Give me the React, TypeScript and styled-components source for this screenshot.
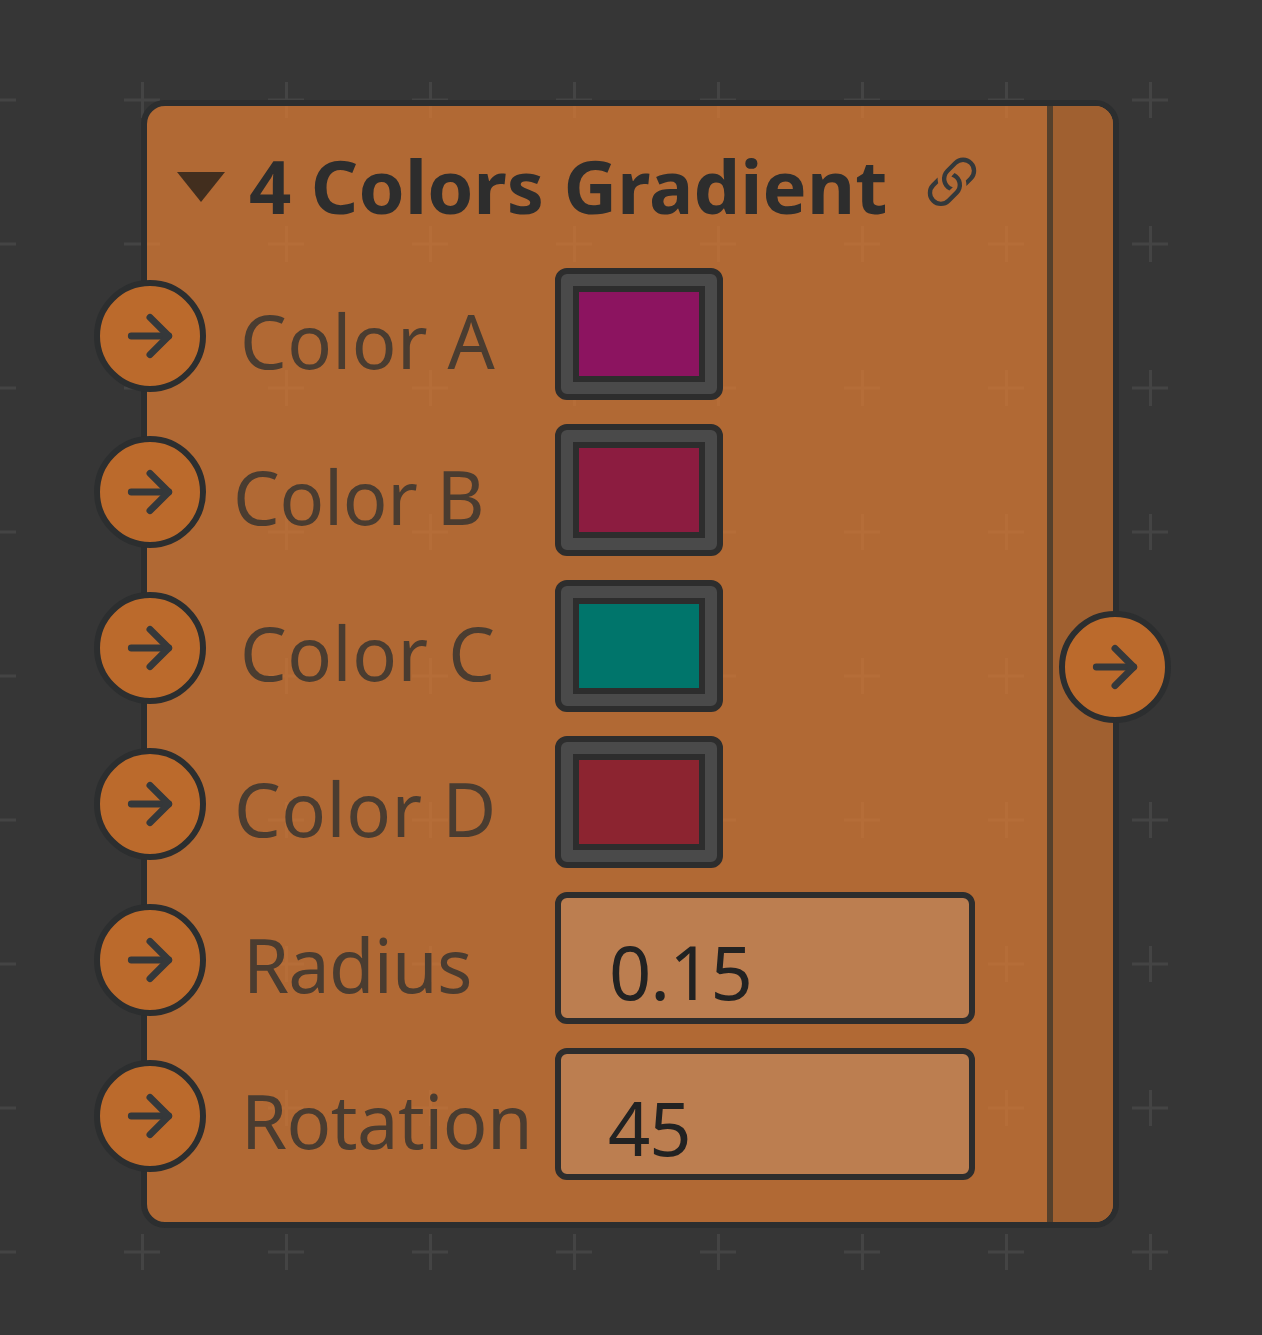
import React from 'react';
import styled, { createGlobalStyle } from 'styled-components';
import { ArrowRight } from 'lucide-react';
import { BsLink45Deg } from 'react-icons/bs';

const GlobalStyle = createGlobalStyle`
  html, body {
    margin: 0;
    padding: 0;
    background: #363636;
  }
  * {
    box-sizing: border-box;
  }
`;

const Page = styled.div`
  position: relative;
  width: 1262px;
  height: 1335px;
  padding: 100px 0 0 141px;
  overflow: hidden;
  background: #363636;
  font-family: 'Noto Sans', 'Open Sans', sans-serif;
`;

const Backdrop = styled.svg`
  position: absolute;
  inset: 0;
  width: 100%;
  height: 100%;
`;

const Node = styled.div`
  position: relative;
  display: flex;
  width: 978px;
  height: 1128px;
  border: 6px solid #2c2e2f;
  border-radius: 24px;
  background: rgba(219, 123, 52, 0.75);
`;

const Main = styled.div`
  flex: 1;
  display: flex;
  flex-direction: column;
`;

const Header = styled.div`
  display: flex;
  align-items: center;
  height: 162px;
  padding: 0 0 2px 30px;
`;

const Collapse = styled.div`
  width: 0;
  height: 0;
  margin: 2px 24px 0 0;
  border-left: 24px solid transparent;
  border-right: 24px solid transparent;
  border-top: 30px solid #422e1e;
`;

const Title = styled.div`
  font-size: 74px;
  font-weight: 700;
  line-height: 80px;
  letter-spacing: 0.15px;
  color: #2d2d2d;
`;

const LinkMark = styled(BsLink45Deg)`
  margin: -4px 0 0 30px;
  color: #34383a;
`;

const Rows = styled.div`
  display: flex;
  flex-direction: column;
  gap: 24px;
`;

const Row = styled.div`
  position: relative;
  display: flex;
  height: 132px;
`;

const Socket = styled.div<{ $side?: boolean }>`
  position: absolute;
  left: ${(p) => (p.$side ? '6px' : '-53px')};
  top: ${(p) => (p.$side ? '505px' : '12px')};
  display: flex;
  align-items: center;
  justify-content: center;
  width: 112px;
  height: 112px;
  border: 6px solid #2c2e2f;
  border-radius: 50%;
  background: #bb6a2c;
  color: #35383a;
`;

const ArrowMark = styled(ArrowRight)`
  filter: blur(0.6px);
`;

const Label = styled.div<{ $indent: number; $tracking: number }>`
  width: 408px;
  padding: 28px 0 0 ${(p) => p.$indent}px;
  font-size: 74px;
  line-height: 90px;
  letter-spacing: ${(p) => p.$tracking}px;
  white-space: nowrap;
  color: #4a3c30;
`;

const Swatch = styled.div`
  width: 168px;
  height: 132px;
  padding: 12px;
  border: 6px solid #2d2d2d;
  border-radius: 12px;
  background: #4a4a4a;
`;

const SwatchFill = styled.div<{ $color: string }>`
  width: 100%;
  height: 100%;
  border: 6px solid #2d2d2d;
  background: ${(p) => p.$color};
`;

const ValueField = styled.div<{ $indent: number }>`
  width: 420px;
  height: 132px;
  padding: 29px 0 0 ${(p) => p.$indent}px;
  border: 6px solid #2d2d2d;
  border-radius: 12px;
  background: #bc7e50;
  font-size: 74px;
  line-height: 90px;
  letter-spacing: -1px;
  color: #222222;
`;

const Side = styled.div`
  position: relative;
  width: 66px;
  border-left: 6px solid #55402c;
  border-radius: 0 18px 18px 0;
  background: #a06030;
`;

const colors = [
  { name: 'Color A', indent: 93, tracking: 0.4, color: '#8c1460' },
  { name: 'Color B', indent: 86, tracking: -0.3, color: '#8c1c40' },
  { name: 'Color C', indent: 93, tracking: 0.5, color: '#00756b' },
  { name: 'Color D', indent: 87, tracking: 0.5, color: '#8c2430' },
];

const values = [
  { name: 'Radius', indent: 96, tracking: -0.8, value: '0.15', offset: 48 },
  { name: 'Rotation', indent: 94, tracking: -0.5, value: '45', offset: 47 },
];

const Arrow = () => <ArrowMark size={64} strokeWidth={2.6} />;

const App = () => {
  return (
    <Page>
      <GlobalStyle />
      <Backdrop>
        <defs>
          <pattern id="crosses" x="-20" y="-62" width="144" height="144" patternUnits="userSpaceOnUse">
            <rect x="0" y="16.5" width="36" height="3" fill="#444444" />
            <rect x="17" y="0" width="3" height="36" fill="#444444" />
          </pattern>
        </defs>
        <rect width="100%" height="100%" fill="url(#crosses)" />
      </Backdrop>
      <Node>
        <Main>
          <Header>
            <Collapse />
            <Title>4 Colors Gradient</Title>
            <LinkMark size={70} />
          </Header>
          <Rows>
            {colors.map((c) => (
              <Row key={c.name}>
                <Socket><Arrow /></Socket>
                <Label $indent={c.indent} $tracking={c.tracking}>{c.name}</Label>
                <Swatch><SwatchFill $color={c.color} /></Swatch>
              </Row>
            ))}
            {values.map((v) => (
              <Row key={v.name}>
                <Socket><Arrow /></Socket>
                <Label $indent={v.indent} $tracking={v.tracking}>{v.name}</Label>
                <ValueField $indent={v.offset}>{v.value}</ValueField>
              </Row>
            ))}
          </Rows>
        </Main>
        <Side>
          <Socket $side><Arrow /></Socket>
        </Side>
      </Node>
    </Page>
  );
};

export default App;
